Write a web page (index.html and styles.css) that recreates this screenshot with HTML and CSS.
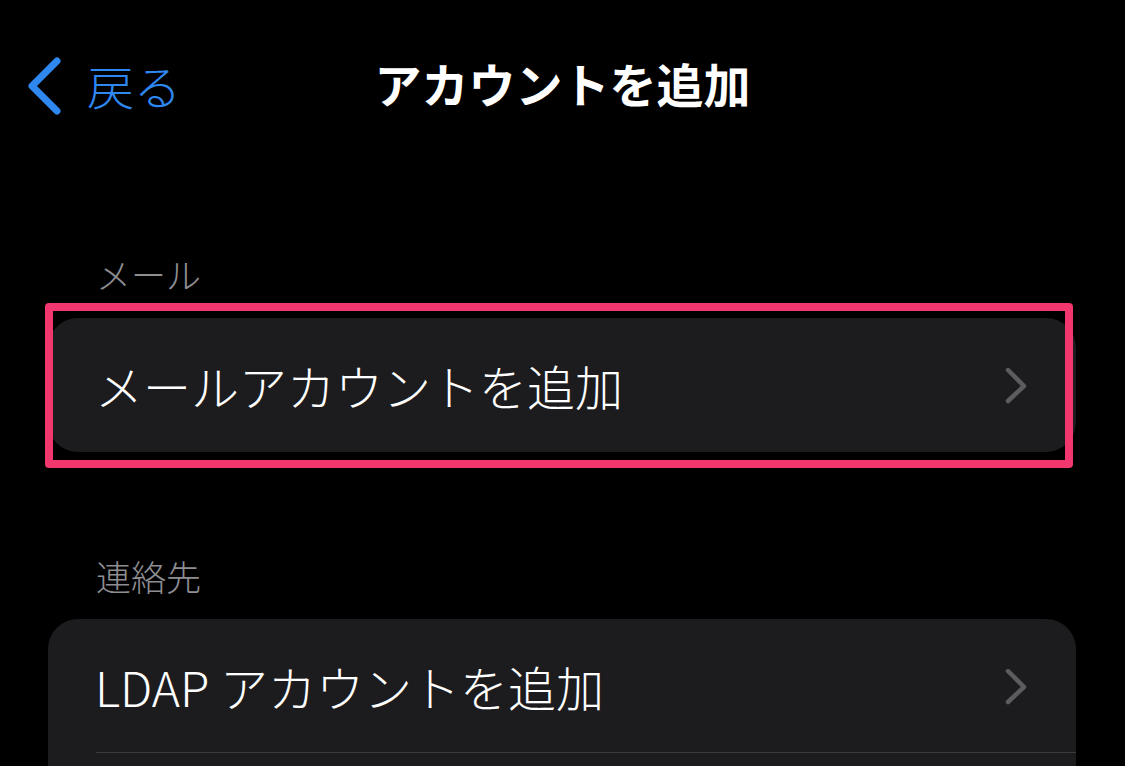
FILE: index.html
```html
<!DOCTYPE html>
<html lang="ja">
<head>
<meta charset="utf-8">
<title>アカウントを追加</title>
<link rel="stylesheet" href="styles.css">
</head>
<body>
<div class="screen">
  <header class="nav">
    <a class="back">
      <svg class="back-icon" width="40" height="60" viewBox="0 0 40 60"><path d="M29 6 L4 31 L29 56" fill="none" stroke="#2f87f0" stroke-width="7" stroke-linecap="round" stroke-linejoin="round"/></svg>
      <span class="back-label">戻る</span>
    </a>
    <h1 class="title">アカウントを追加</h1>
    <div class="nav-spacer"></div>
  </header>

  <section class="group first">
    <div class="group-header">メール</div>
    <div class="card">
      <div class="highlight"></div>
      <div class="row">
        <span class="row-label">メールアカウントを追加</span>
        <svg class="chev" width="24" height="36" viewBox="0 0 24 36"><path d="M4 2 L20 18 L4 33" fill="none" stroke="#5b5b60" stroke-width="4.5" stroke-linecap="round" stroke-linejoin="round"/></svg>
      </div>
    </div>
  </section>

  <section class="group second">
    <div class="group-header">連絡先</div>
    <div class="card">
      <div class="row with-sep">
        <span class="row-label">LDAP アカウントを追加</span>
        <svg class="chev" width="24" height="36" viewBox="0 0 24 36"><path d="M4 2 L20 18 L4 33" fill="none" stroke="#5b5b60" stroke-width="4.5" stroke-linecap="round" stroke-linejoin="round"/></svg>
      </div>
      <div class="row"></div>
    </div>
  </section>
</div>
</body>
</html>
```

FILE: styles.css
```css
* { box-sizing: border-box; }
html, body {
  margin: 0;
  padding: 0;
  background: #000;
  overflow: hidden;
}
body {
  font-family: "Noto Sans CJK JP", "Noto Sans", sans-serif;
  color: #fff;
}
.screen {
  width: 1125px;
  height: 766px;
  overflow: hidden;
  display: flex;
  flex-direction: column;
}
.screen > * { flex-shrink: 0; }
.nav {
  height: 170px;
  display: grid;
  grid-template-columns: 1fr auto 1fr;
  align-items: center;
}
.back {
  display: flex;
  align-items: center;
  gap: 19px;
  margin-left: 28px;
  color: #2f87f0;
}
.back-icon { display: block; }
.back-label {
  font-size: 47px;
  font-weight: 300;
  line-height: 1;
  margin-top: -2px;
}
.title {
  margin: -6px 0 0;
  font-size: 47px;
  font-weight: 700;
  line-height: 1;
}
.group {
  display: flex;
  flex-direction: column;
  padding: 0 49px 0 48px;
}
.group.first { margin-top: 84px; }
.group.second { margin-top: 104px; }
.group-header {
  font-size: 35px;
  font-weight: 300;
  line-height: 40px;
  color: #8e8e93;
  padding-left: 48px;
  margin-bottom: 24px;
}
.second .group-header { margin-bottom: 23px; }
.card {
  position: relative;
  background: #1c1c1e;
  border-radius: 30px;
}
.highlight {
  position: absolute;
  left: -3px;
  top: -15px;
  width: 1028px;
  height: 165px;
  border: 8px solid #f2366e;
  border-radius: 4px;
  z-index: 2;
}
.row {
  height: 134px;
  display: flex;
  align-items: center;
  justify-content: space-between;
  padding: 0 48px 0 47px;
  position: relative;
}
.row-label {
  font-size: 48px;
  font-weight: 300;
  line-height: 1;
  color: #fff;
}
.chev { display: block; margin-top: 2px; }
.with-sep::after {
  content: "";
  position: absolute;
  left: 48px;
  right: 0;
  bottom: 0;
  height: 1px;
  background: #3a3a3c;
}
```
